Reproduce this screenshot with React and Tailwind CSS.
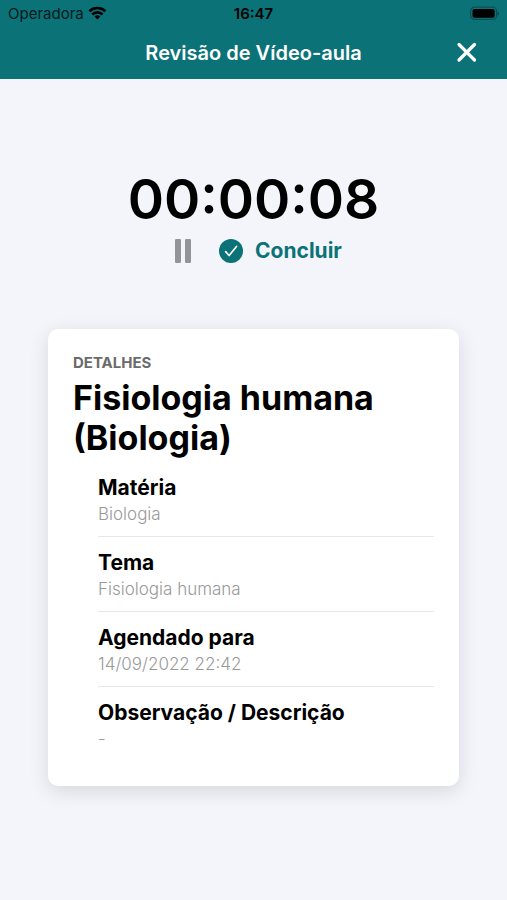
import React, { useEffect, useState } from 'react';

const details = [
  { label: 'Matéria', value: 'Biologia' },
  { label: 'Tema', value: 'Fisiologia humana' },
  { label: 'Agendado para', value: '14/09/2022 22:42' },
  { label: 'Observação / Descrição', value: '-' },
];

const pad = (n) => String(n).padStart(2, '0');

function formatTime(total) {
  return `${pad(Math.floor(total / 3600))}:${pad(Math.floor(total / 60) % 60)}:${pad(total % 60)}`;
}

function StatusBar() {
  return (
    <div className="grid grid-cols-3 items-center h-7 px-2 text-[15px] text-black/80">
      <div className="flex items-center gap-1">
        <span>Operadora</span>
        <svg className="w-5 h-4 text-black" viewBox="0 0 20 16" fill="none" stroke="currentColor" strokeWidth="2.6">
          <path d="M1.4 5.2a11.8 11.8 0 0 1 16 0" />
          <path d="M4.2 8.5a7.4 7.4 0 0 1 10.4 0" />
          <path d="M9.4 13.6l-2.9-3a4.1 4.1 0 0 1 5.8 0z" fill="currentColor" stroke="none" />
        </svg>
      </div>
      <span className="text-center font-semibold text-black">16:47</span>
      <svg className="justify-self-end w-8 h-4" viewBox="-2 0 32 16">
        <rect x="1.6" y="1.2" width="26" height="12.2" rx="4" fill="none" stroke="#000" strokeOpacity="0.3" strokeWidth="1.2" />
        <rect x="3.5" y="2.9" width="22.2" height="8.8" rx="2" fill="#000" />
        <path d="M28.6 5.3v4.2a2.2 2.2 0 0 0 0-4.2z" fill="#000" fillOpacity="0.35" />
      </svg>
    </div>
  );
}

export default function App() {
  const [seconds, setSeconds] = useState(8);
  const [running, setRunning] = useState(false);

  useEffect(() => {
    if (!running) return;
    const timer = setInterval(() => setSeconds((s) => s + 1), 1000);
    return () => clearInterval(timer);
  }, [running]);

  return (
    <div className="min-h-screen bg-[#f4f5fa] font-['Inter',sans-serif] text-black">
      <header className="bg-[#0b7277]">
        <StatusBar />
        <div className="grid grid-cols-[48px_1fr_48px] items-center h-[51px] px-4 pb-[2px]">
          <h1 className="col-start-2 text-center text-xl font-semibold text-white">Revisão de Vídeo-aula</h1>
          <button type="button" aria-label="Fechar" className="justify-self-end p-3 text-white">
            <svg className="w-6 h-6" viewBox="0 0 24 24" fill="none" stroke="currentColor" strokeWidth="3.2" strokeLinecap="round">
              <path d="M4 3.5l15.5 15.5M19.5 3.5L4 19" />
            </svg>
          </button>
        </div>
      </header>

      <main className="px-12 pt-[88px] pb-12">
        <section className="flex flex-col items-center">
          <p className="text-[55px] leading-[64px] font-semibold" role="timer">{formatTime(seconds)}</p>
          <div className="flex items-center gap-6 mt-[6px] pl-[6px]">
            <button type="button" aria-label="Pausar" onClick={() => setRunning(!running)}>
              <svg className="w-6 h-6" viewBox="0 0 24 24" fill="#929498">
                <rect x="4" y="0" width="6" height="24" rx="1.2" />
                <rect x="14" y="0" width="6" height="24" rx="1.2" />
              </svg>
            </button>
            <button type="button" className="flex items-center gap-3 text-[21px] leading-7 font-bold text-[#0b7277]">
              <svg className="w-6 h-6" viewBox="0 0 24 24">
                <circle cx="12" cy="12" r="12" fill="#0b7277" />
                <path d="M6.6 12.6l3.5 3.9 7.4-9" fill="none" stroke="#fff" strokeWidth="1.7" strokeLinecap="round" strokeLinejoin="round" />
              </svg>
              Concluir
            </button>
          </div>
        </section>

        <section className="mt-16 rounded-[10px] bg-white px-[25px] pt-6 pb-[25px] shadow-[0_5px_20px_rgba(0,0,0,0.12)]">
          <h3 className="text-[15px] leading-5 font-bold text-[#6b6b6b]">DETALHES</h3>
          <h2 className="mt-[5px] text-[34px] leading-[40px] font-bold">Fisiologia humana (Biologia)</h2>
          <ul className="mt-1 pl-[25px]">
            {details.map((d) => (
              <li key={d.label} className="border-b border-[#e6e7e8] pt-3 pb-[10px] last:border-b-0">
                <h4 className="text-[21px] leading-7 font-bold">{d.label}</h4>
                <p className="text-[17px] leading-6 font-light text-[#999]">{d.value}</p>
              </li>
            ))}
          </ul>
        </section>
      </main>
    </div>
  );
}
